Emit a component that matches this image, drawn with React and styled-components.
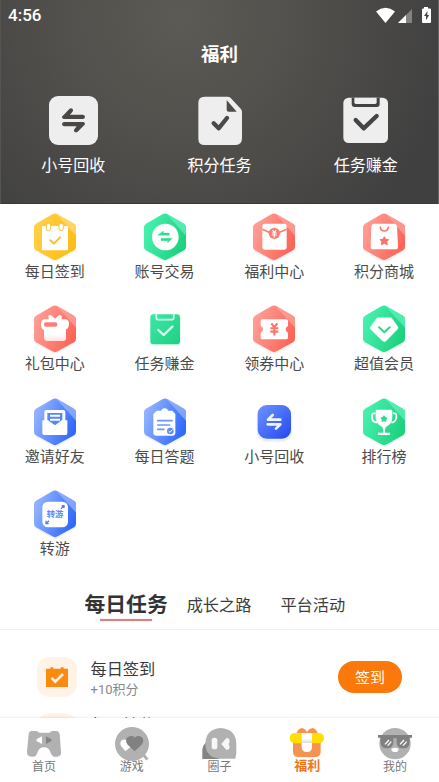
import React from 'react';
import styled, { createGlobalStyle } from 'styled-components';

const GlobalStyle = createGlobalStyle`
  * { box-sizing: border-box; }
  body {
    margin: 0;
    background: #fff;
    overflow: hidden;
    font-family: Roboto, "Noto Sans CJK SC", sans-serif;
    color: #444;
  }
  svg { display: block; flex: none; }
`;

const Screen = styled.main`
  display: flex;
  flex-direction: column;
  width: 439px;
  height: 782px;
  overflow: hidden;
  background: #fff;
`;

const Header = styled.header`
  flex: none;
  height: 204px;
  display: flex;
  flex-direction: column;
  color: #fff;
  background: radial-gradient(circle at 180px 18px, #5b5a55 0, #52514d 110px, #474645 215px, #404040 275px);
  box-shadow: inset -1px 0 #666, inset 1px 0 #555450, inset 0 -1px #3b3939;
`;

const StatusBar = styled.div`
  display: flex;
  align-items: center;
  justify-content: space-between;
  height: 30px;
  padding: 0 7px 0 8px;
`;

const Clock = styled.span`
  font-size: 17px;
  font-weight: 500;
  line-height: 30px;
`;

const PageTitle = styled.h1`
  margin: 0;
  height: 50px;
  line-height: 51px;
  text-align: center;
  font-size: 18.5px;
  font-weight: 700;
`;

const Shortcuts = styled.nav`
  display: grid;
  grid-template-columns: repeat(3, 1fr);
  padding-top: 16px;
`;

const Shortcut = styled.a`
  display: flex;
  flex-direction: column;
  align-items: center;
  gap: 9px;
  font-size: 16px;
  line-height: 24px;
`;

const ServiceGrid = styled.section`
  flex: none;
  display: grid;
  grid-template-columns: repeat(4, 1fr);
  grid-auto-rows: 92.4px;
  height: 376px;
  padding-top: 9px;
`;

const Service = styled.a`
  display: flex;
  flex-direction: column;
  align-items: center;
  font-size: 15px;
  line-height: 22px;
  color: #4a4a4a;
`;

const Tabs = styled.div`
  flex: none;
  display: flex;
  align-items: flex-start;
  height: 50px;
  padding: 12px 0 0 84.5px;
  border-bottom: 1px solid #f0f0f0;
`;

const Tab = styled.button`
  display: flex;
  flex-direction: column;
  align-items: center;
  border: 0;
  padding: 0;
  background: none;
  font-family: inherit;
  white-space: nowrap;
  line-height: 27px;
  font-size: ${(p) => (p.$active ? '20.8px' : '16.2px')};
  font-weight: ${(p) => (p.$active ? 700 : 400)};
  color: ${(p) => (p.$active ? '#333' : '#3c3c3c')};
  margin-right: ${(p) => p.$gap || 0}px;

  &::after {
    content: '';
    width: 52px;
    height: 2px;
    background: ${(p) => (p.$active ? '#d9827b' : 'transparent')};
    box-shadow: 0 0 1px ${(p) => (p.$active ? '#e9b3ae' : 'transparent')};
  }
`;

const TaskList = styled.section`
  flex: 1;
  min-height: 0;
  overflow: hidden;
  padding-top: 19px;
`;

const Task = styled.div`
  display: flex;
  align-items: center;
  height: 56px;
  padding: 0 37px;
`;

const TaskIcon = styled.div`
  display: grid;
  place-items: center;
  width: 40px;
  height: 40px;
  border-radius: 13px;
  background: #fff3e7;
`;

const TaskText = styled.div`
  flex: 1;
  padding: 2px 0 0 13.5px;
`;

const TaskTitle = styled.div`
  font-size: 16.2px;
  line-height: 22px;
  color: #383838;
`;

const TaskReward = styled.div`
  font-size: 13px;
  line-height: 17px;
  color: #888;
`;

const SignButton = styled.button`
  width: 64px;
  height: 32px;
  border: 0;
  padding: 0 0 1px;
  border-radius: 16px;
  background: #fb780b;
  color: #fff;
  font-family: inherit;
  font-size: 15px;
`;

const BottomNav = styled.nav`
  flex: none;
  display: grid;
  grid-template-columns: repeat(5, 1fr);
  height: 64.5px;
  padding-top: 8.5px;
  background: #fff;
  box-shadow: 0 -1px 2px rgba(0, 0, 0, 0.07);
`;

const NavItem = styled.a`
  display: flex;
  flex-direction: column;
  align-items: center;
  line-height: 14px;
  font-size: ${(p) => (p.$active ? '13px' : '12px')};
  font-weight: ${(p) => (p.$active ? 700 : 400)};
  color: ${(p) => (p.$active ? '#f47418' : '#777')};

  svg { margin-bottom: ${(p) => (p.$active ? '-3.5px' : '-2.5px')}; }
`;

const tones = {
  yellow: ['#ffcf45', '#fcbd17', '#ffe08a'],
  green: ['#45f0ae', '#1dd17d', '#65f7c3'],
  red: ['#ff9c94', '#fb6557', '#ffaaa2'],
  blue: ['#8fb1ff', '#3069fb', '#a4bffd'],
};

function HexIcon({ tone, id, children }) {
  const [from, to, shine] = tones[tone];
  const outline = 'M64 4Q72 -1 80 4L129 32Q135 36 135 43V101Q135 108 129 112L80 139Q72 144 64 139L15 112Q9 108 9 101V43Q9 36 15 32Z';
  return (
    <svg width="48" height="48" viewBox="0 0 144 144" overflow="visible">
      <defs>
        <linearGradient id={`g-${id}`} x1="0" y1="0.3" x2="1" y2="0.7">
          <stop offset="0.05" stopColor={from} />
          <stop offset="0.95" stopColor={to} />
        </linearGradient>
        <clipPath id={`c-${id}`}><path d={outline} /></clipPath>
      </defs>
      <path d={outline} fill={to} opacity="0.1" transform="translate(0 4)" />
      <path d={outline} fill={`url(#g-${id})`} />
      <path d="M72 -2L144 78V0Z" fill={shine} opacity="0.65" clipPath={`url(#c-${id})`} />
      {children}
    </svg>
  );
}

const Yen = ({ x, y, s, w, color }) => (
  <path
    transform={`translate(${x} ${y}) scale(${s})`}
    d="M-8 -16L0 -5L8 -16M0 -5V17M-11 -3H11M-11 6H11"
    stroke={color} strokeWidth={w} fill="none"
  />
);

const CheckinIcon = () => (
  <HexIcon tone="yellow" id="checkin">
    <rect x="33" y="39" width="78" height="73" rx="3" fill="#fff" />
    <rect x="46" y="31" width="13" height="22" rx="6" fill="#fff" stroke="#fdc32b" strokeWidth="3" />
    <rect x="84" y="31" width="13" height="22" rx="6" fill="#fff" stroke="#fdc32b" strokeWidth="3" />
    <path d="M58 82L69 92L87 73" fill="none" stroke="#fcbf26" strokeWidth="6" strokeLinecap="round" strokeLinejoin="round" />
  </HexIcon>
);

const TradeIcon = () => (
  <HexIcon tone="green" id="trade">
    <circle cx="73" cy="72" r="40" fill="#fff" />
    <path d="M51 66L67 54V60H85V67H51ZM94 76L80 89V83H60V76Z" fill="#2fdd92" stroke="#2fdd92" strokeLinejoin="round" />
  </HexIcon>
);

const WelfareIcon = () => (
  <HexIcon tone="red" id="welfare">
    <rect x="37" y="32" width="73" height="78" rx="7" fill="#fff" />
    <path d="M37 49L57 58M89 58L110 49" stroke="#fb7d72" strokeWidth="5" />
    <circle cx="73" cy="61" r="17" fill="#fb7d72" />
    <Yen x={73} y={62} s={0.66} w={5} color="#fff" />
  </HexIcon>
);

const MallIcon = () => (
  <HexIcon tone="red" id="mall">
    <path d="M43 32H102Q110 32 111 41L114 101Q114 109 106 109H40Q32 109 32 101L34 41Q35 32 43 32Z" fill="#fff" />
    <path d="M61 43Q63 54 73 54Q83 54 85 43" fill="none" stroke="#fa746a" strokeWidth="5" strokeLinecap="round" />
    <path d="M73 71L77 79L86 80L80 86L82 95L73 91L64 95L66 86L60 80L69 79Z" fill="#fa746a" stroke="#fa746a" strokeWidth="3" strokeLinejoin="round" />
  </HexIcon>
);

const GiftIcon = () => (
  <HexIcon tone="red" id="gift">
    <defs>
      <linearGradient id="gift-body" x1="0" y1="0" x2="0" y2="1">
        <stop offset="0.7" stopColor="#fff" /><stop offset="1" stopColor="#ffe1de" />
      </linearGradient>
    </defs>
    <path d="M53 45L52 32Q57 27 64 34L72 41L80 34Q87 27 92 33L92 45Z" fill="#fff" />
    <path d="M40 43H104Q115 45 114 57Q113 71 105 73V101Q104 108 95 108H49Q40 108 39 99V75Q30 72 30 58Q30 45 40 43Z" fill="url(#gift-body)" />
    <rect x="39" y="52" width="40" height="13" rx="6" fill="#fb8178" />
  </HexIcon>
);

const CouponIcon = () => (
  <HexIcon tone="red" id="coupon">
    <path d="M36 43H109Q114 43 114 49V63Q107 66 107 73Q107 80 114 83V97Q114 103 109 103H36Q32 103 32 97V83Q39 80 39 73Q39 66 32 63V49Q32 43 36 43Z" fill="#fff" />
    <Yen x={73} y={73} s={1.1} w={6} color="#fb776b" />
  </HexIcon>
);

const VipIcon = () => (
  <HexIcon tone="green" id="vip">
    <path d="M51 38H94L114 66Q115 70 112 73L78 108Q73 112 68 108L32 73Q29 69 32 65Z" fill="#fff" stroke="#fff" strokeWidth="1" strokeLinejoin="round" />
    <path d="M57 67L73 82L89 67" fill="none" stroke="#28d98b" strokeWidth="6" strokeLinecap="round" strokeLinejoin="round" />
  </HexIcon>
);

const InviteIcon = () => (
  <HexIcon tone="blue" id="invite">
    <path d="M46 36H97Q103 36 103 42V67H109V106Q109 111 104 111H39Q34 111 34 106V67H40V42Q40 36 46 36Z" fill="#fff" />
    <path d="M49 45H94V65L72 82L49 65Z" fill="#5587fb" />
    <path d="M57 53H87M57 65H87" stroke="#fff" strokeWidth="6" />
  </HexIcon>
);

const QuizIcon = () => (
  <HexIcon tone="blue" id="quiz">
    <path d="M47 38H60Q63 31 71 31Q79 31 82 38H94L103 48V104Q103 113 94 113H46Q37 113 37 104V48Z" fill="#fff" />
    <path d="M50 68H93M50 81H86M50 94H69" stroke="#6c96fa" strokeWidth="5" strokeLinecap="round" />
    <circle cx="88" cy="99" r="10" fill="#5f8bf5" />
    <path d="M83 99L87 103L94 95" stroke="#fff" strokeWidth="3" fill="none" />
  </HexIcon>
);

const RankIcon = () => (
  <HexIcon tone="green" id="rank">
    <path d="M46 46H41Q36 46 36 52V59Q37 73 51 74M99 46H104Q109 46 109 52V59Q107 73 94 74" fill="none" stroke="#fff" strokeWidth="5" />
    <path d="M47 39Q47 35 51 35H93Q97 35 97 39V58Q97 76 82 84Q76 87 75 94V104H90V111H54V104H69V94Q69 87 62 84Q47 76 47 58Z" fill="#fff" />
    <path d="M72 51L76 57L83 59L79 65L79 72L72 70L65 72L65 65L61 59L68 57Z" fill="#2edb92" />
  </HexIcon>
);

const TransferIcon = () => (
  <HexIcon tone="blue" id="transfer">
    <rect x="34" y="35" width="77" height="77" rx="17" fill="#fff" />
    <text x="72" y="81" textAnchor="middle" fontSize="25" fontWeight="700" fill="#5d8bf6" fontFamily="Noto Sans CJK SC, sans-serif">转游</text>
    <path d="M90 56L97 49M92 47H99V54M54 92L47 99M45 92V101H53" fill="none" stroke="#4f7ff4" strokeWidth="4" />
  </HexIcon>
);

const EarnIcon = () => (
  <svg width="48" height="48" viewBox="0 0 144 144">
    <defs>
      <linearGradient id="earn" x1="0" y1="0" x2="1" y2="1">
        <stop stopColor="#3ee7a6" /><stop offset="1" stopColor="#1dd083" />
      </linearGradient>
    </defs>
    <rect x="25" y="32" width="94" height="92" rx="12" fill="#26d68c" opacity="0.12" />
    <rect x="28" y="28" width="89" height="90" rx="9" fill="url(#earn)" />
    <path d="M46 28V39Q46 44 51 44H93Q98 44 98 39V28" fill="none" stroke="#d5ffee" strokeWidth="5" />
    <path d="M52 75L68 90L94 65" fill="none" stroke="#e3fff4" strokeWidth="7" strokeLinecap="round" strokeLinejoin="round" />
  </svg>
);

const RecycleIcon = () => (
  <svg width="48" height="48" viewBox="0 0 144 144" overflow="visible">
    <defs>
      <linearGradient id="recycle" x1="0" y1="0" x2="1" y2="1">
        <stop stopColor="#6d94ff" /><stop offset="1" stopColor="#2448ee" />
      </linearGradient>
    </defs>
    <rect x="20" y="25" width="106" height="106" rx="30" fill="#3f63f2" opacity="0.1" />
    <rect x="23" y="21" width="100" height="101" rx="27" fill="url(#recycle)" />
    <path d="M91 65H54L68 51M53 79H91L78 92" fill="none" stroke="#f2f5ff" strokeWidth="8" strokeLinecap="round" strokeLinejoin="round" />
  </svg>
);

const SwapTile = () => (
  <svg width="49" height="49" viewBox="0 0 147 147">
    <rect width="147" height="147" rx="27" fill="#eee" />
    <path d="M44 57L61 39Q66 35 71 39Q74 43 70 48L63 56H102Q108 57 108 62Q108 68 102 69H44Q39 67 39 63Q39 60 44 57ZM103 90L86 107Q81 111 76 107Q73 103 77 98L83 91H45Q39 89 39 84Q39 79 45 78H103Q108 79 108 84Q107 87 103 90Z" fill="#494846" />
  </svg>
);

const DocTile = () => (
  <svg width="49" height="49" viewBox="0 0 147 147">
    <path d="M29 2H97Q103 2 107 6L137 38Q141 42 141 48V127Q141 147 122 147H29Q10 147 10 128V21Q10 2 29 2Z" fill="#eee" />
    <path d="M95 12V41Q95 47 101 47H125Z" fill="#4d4c49" />
    <path d="M56 82L71 97L96 66" fill="none" stroke="#4b4a48" strokeWidth="13" strokeLinecap="round" strokeLinejoin="round" />
  </svg>
);

const ClipTile = () => (
  <svg width="49" height="49" viewBox="0 0 147 147">
    <rect x="7" y="5" width="134" height="136" rx="16" fill="#eee" />
    <path d="M32 5H116V24Q116 33 107 33H41Q32 33 32 24Z" fill="#434343" />
    <path d="M40 5H107V19Q107 24 102 24H45Q40 24 40 19Z" fill="#eee" />
    <path d="M44 72L68 97L107 60" fill="none" stroke="#444" strokeWidth="13" strokeLinecap="round" strokeLinejoin="round" />
  </svg>
);

const StatusIcons = () => (
  <svg width="56" height="18" viewBox="0 0 56 18">
    <path d="M0 5.4Q9.5 -1.8 19 5.4L9.5 17Z" fill="#fff" />
    <path d="M36 3V17H22Z" fill="#838383" />
    <path d="M30 9V17H22Z" fill="#fff" />
    <path d="M48 1H52V2.5H54Q55 2.5 55 3.5V16Q55 17 54 17H47Q46 17 46 16V3.5Q46 2.5 47 2.5H48Z" fill="#fff" />
    <path d="M51.5 5L48 10H50V14.2L53.2 9H51.2Z" fill="#444" />
  </svg>
);

const HomeIcon = () => (
  <svg width="36" height="36" viewBox="0 0 108 108">
    <path d="M17 15H29Q37 15 39 20H71Q73 15 80 15H91Q99 15 101 25L105 78Q106 92 93 92H85Q78 91 74 80Q69 64 54 64Q39 64 34 80Q31 92 21 92H16Q2 91 3 77L8 25Q9 15 17 15Z" fill="#b1b1b1" />
    <path d="M48 31V54L33 46Q28 43 33 39Z" fill="#fff" />
    <path d="M60 31V54L75 46Q80 43 75 39Z" fill="#848484" />
  </svg>
);

const GamesIcon = () => (
  <svg width="36" height="36" viewBox="0 0 108 108">
    <path d="M88 86L100 101" stroke="#b1b1b1" strokeWidth="9" />
    <circle cx="54" cy="54" r="51" fill="#b1b1b1" />
    <path d="M34 76L21 60Q16 48 24 42Q31 39 37 43Q42 34 52 40Q61 50 52 61Z" fill="#fff" />
    <path d="M62 76L41 56Q34 48 37 38Q43 28 54 30Q60 31 62 35Q65 30 74 30Q86 31 88 43Q88 51 82 57Z" fill="#818181" />
  </svg>
);

const CircleIcon = () => (
  <svg width="36" height="36" viewBox="0 0 108 108">
    <path d="M20 45Q2 57 4 79V99H55Z" fill="#848484" />
    <path d="M59 6Q106 9 106 56V82L103 98H57Q14 95 13 54Q14 9 59 6Z" fill="#b1b1b1" />
    <rect x="32" y="35" width="17" height="35" rx="8" fill="#f7f7f7" />
    <path d="M61 54L73 40Q79 33 84 39Q88 44 83 54Q88 63 84 68Q79 75 73 68Z" fill="#f7f7f7" />
  </svg>
);

const BenefitIcon = () => (
  <svg width="36" height="36" viewBox="0 0 108 108">
    <defs>
      <linearGradient id="ribbon" x1="0" y1="0" x2="0" y2="1">
        <stop offset="0.3" stopColor="#fff" /><stop offset="0.5" stopColor="#ddd" /><stop offset="0.55" stopColor="#fff" />
      </linearGradient>
    </defs>
    <path d="M22 23Q26 8 40 6Q49 8 54 18Q59 8 70 6Q82 8 87 23Z" fill="#f79351" />
    <path d="M12 45H95V77Q95 93 79 93H28Q12 93 12 77Z" fill="#f79351" />
    <rect x="2" y="21" width="103" height="31" rx="15" fill="#ffdf05" />
    <path d="M38 21H69V62Q69 78 54 78Q38 78 38 62Z" fill="url(#ribbon)" />
  </svg>
);

const MineIcon = () => (
  <svg width="36" height="36" viewBox="0 0 108 108">
    <circle cx="54" cy="53" r="47" fill="#b1b1b1" />
    <path d="M3 27H105V35H98V49Q96 67 82 67H75Q61 66 59 50V37H49V50Q47 66 33 67H26Q12 66 10 49V35H3Z" fill="#808080" />
    <path d="M24 55L36 42M32 59L43 47M69 55L81 42M78 59L89 47" stroke="#fff" strokeWidth="4" />
    <path d="M43 68Q54 63 65 68Q65 78 54 78Q43 78 43 68Z" fill="#fff" />
  </svg>
);

const CalendarGlyph = () => (
  <svg width="22" height="20" viewBox="0 0 66 60">
    <path d="M0 5H13V1H22V5H44V1H53V5H66V60H0Z" fill="#fb8a10" />
    <path d="M17 33L28 44L51 21" fill="none" stroke="#fff3e7" strokeWidth="8" />
  </svg>
);

const shortcuts = [
  ['小号回收', SwapTile],
  ['积分任务', DocTile],
  ['任务赚金', ClipTile],
];

const services = [
  ['每日签到', CheckinIcon], ['账号交易', TradeIcon], ['福利中心', WelfareIcon], ['积分商城', MallIcon],
  ['礼包中心', GiftIcon], ['任务赚金', EarnIcon], ['领券中心', CouponIcon], ['超值会员', VipIcon],
  ['邀请好友', InviteIcon], ['每日答题', QuizIcon], ['小号回收', RecycleIcon], ['排行榜', RankIcon],
  ['转游', TransferIcon],
];

const tasks = [
  { title: '每日签到', reward: '+10积分', action: '签到' },
  { title: '每日抽奖' },
];

const navItems = [
  ['首页', HomeIcon], ['游戏', GamesIcon], ['圈子', CircleIcon], ['福利', BenefitIcon, true], ['我的', MineIcon],
];

export default function App() {
  return (
    <Screen>
      <GlobalStyle />
      <Header>
        <StatusBar><Clock>4:56</Clock><StatusIcons /></StatusBar>
        <PageTitle>福利</PageTitle>
        <Shortcuts>
          {shortcuts.map(([label, Icon]) => (
            <Shortcut key={label}><Icon />{label}</Shortcut>
          ))}
        </Shortcuts>
      </Header>
      <ServiceGrid>
        {services.map(([label, Icon]) => (
          <Service key={label}><Icon />{label}</Service>
        ))}
      </ServiceGrid>
      <Tabs>
        <Tab $active $gap={19}>每日任务</Tab>
        <Tab $gap={29}>成长之路</Tab>
        <Tab>平台活动</Tab>
      </Tabs>
      <TaskList>
        {tasks.map((task) => (
          <Task key={task.title}>
            <TaskIcon><CalendarGlyph /></TaskIcon>
            <TaskText>
              <TaskTitle>{task.title}</TaskTitle>
              <TaskReward>{task.reward || '\u00a0'}</TaskReward>
            </TaskText>
            {task.action && <SignButton>{task.action}</SignButton>}
          </Task>
        ))}
      </TaskList>
      <BottomNav>
        {navItems.map(([label, Icon, active]) => (
          <NavItem key={label} $active={active}><Icon /><span>{label}</span></NavItem>
        ))}
      </BottomNav>
    </Screen>
  );
}
